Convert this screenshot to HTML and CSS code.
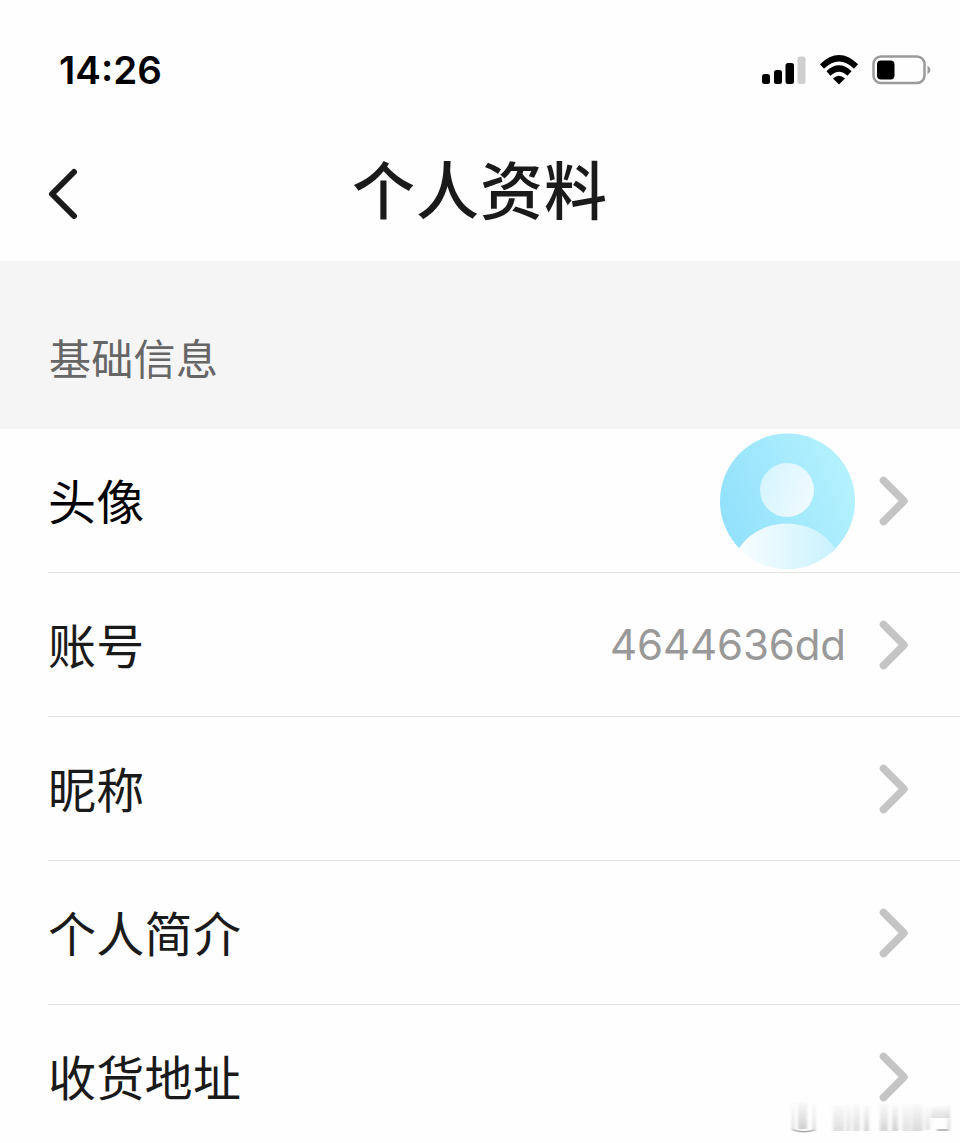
FILE: index.html
```html
<!DOCTYPE html>
<html lang="zh-CN">
<head>
    <meta charset="UTF-8">
    <meta name="viewport" content="width=device-width, initial-scale=1.0">
    <title>个人资料</title>
    <link rel="stylesheet" href="styles.css">
</head>
<body>
    <div class="status-bar">
        <div class="time">14<span class="colon">:</span>26</div>
        <svg class="status-icons" width="172" height="32" viewBox="0 0 172 32" aria-hidden="true">
            <!-- signal -->
            <rect x="2" y="19" width="8" height="10" rx="2.5"/>
            <rect x="14" y="15" width="8" height="14" rx="2.5"/>
            <rect x="25.500" y="8" width="8.500" height="21" rx="2.500"/>
            <rect x="37.500" y="1.500" width="8" height="27.500" rx="2.500" fill="#cfcfcf"/>
            <!-- wifi -->
            <path d="M62 11.500Q79 -5 96 11.500" fill="none" stroke="#000" stroke-width="6"/>
            <path d="M68.500 18.500Q79 8.500 89.500 18.500" fill="none" stroke="#000" stroke-width="6"/>
            <path d="M73 23.500Q79 18 85 23.500L79 29.500Z"/>
            <!-- battery -->
            <rect x="113.500" y="1.500" width="51" height="26.500" rx="7.500" fill="none" stroke="#9b9b9b" stroke-width="2.500"/>
            <rect x="117" y="5.500" width="17.500" height="19" rx="4"/>
            <path d="M167.500 10.500q6 4.500 0 9z" fill="#9b9b9b"/>
        </svg>
    </div>

    <header class="nav">
        <svg class="back" width="32" height="56" viewBox="0 0 32 56" aria-label="返回">
            <path d="M26 6L4 28L26 50" fill="none" stroke="#1a1a1a" stroke-width="6" stroke-linecap="round" stroke-linejoin="round"/>
        </svg>
        <h1>个人资料</h1>
    </header>

    <h2 class="section-title">基础信息</h2>

    <ul class="list">
        <li class="row">
            <span class="label first">头像</span>
            <svg class="avatar" width="136" height="136" viewBox="0 0 136 136" aria-hidden="true">
                <defs>
                    <linearGradient id="bg" x1="0" y1="0.700" x2="1" y2="0.300">
                        <stop offset="0" stop-color="#91e0fc"/>
                        <stop offset="1" stop-color="#b5f2fe"/>
                    </linearGradient>
                    <linearGradient id="head" x1="0" y1="0" x2="1" y2="0.300">
                        <stop offset="0" stop-color="#d3f4fe"/>
                        <stop offset="1" stop-color="#edfaff"/>
                    </linearGradient>
                    <linearGradient id="shoulders" x1="0.100" y1="0" x2="0.850" y2="0">
                        <stop offset="0" stop-color="#fbfeff"/>
                        <stop offset="1" stop-color="#c9f2fe"/>
                    </linearGradient>
                    <clipPath id="body"><ellipse cx="67" cy="137" rx="54" ry="46.500"/></clipPath>
                </defs>
                <circle cx="67.500" cy="68" r="67.500" fill="url(#bg)"/>
                <circle cx="67" cy="57" r="27" fill="url(#head)"/>
                <circle cx="67.500" cy="68" r="68" fill="url(#shoulders)" clip-path="url(#body)"/>
            </svg>
            <svg class="arrow" width="32" height="52" viewBox="0 0 32 52"><path d="M5.500 5.500L26 26L5.500 46.500"/></svg>
        </li>
        <li class="row">
            <span class="label">账号</span>
            <span class="value">4644636dd</span>
            <svg class="arrow" width="32" height="52" viewBox="0 0 32 52"><path d="M5.500 5.500L26 26L5.500 46.500"/></svg>
        </li>
        <li class="row">
            <span class="label">昵称</span>
            <svg class="arrow" width="32" height="52" viewBox="0 0 32 52"><path d="M5.500 5.500L26 26L5.500 46.500"/></svg>
        </li>
        <li class="row">
            <span class="label">个人简介</span>
            <svg class="arrow" width="32" height="52" viewBox="0 0 32 52"><path d="M5.500 5.500L26 26L5.500 46.500"/></svg>
        </li>
        <li class="row">
            <span class="label">收货地址</span>
            <svg class="arrow" width="32" height="52" viewBox="0 0 32 52"><path d="M5.500 5.500L26 26L5.500 46.500"/></svg>
        </li>
    </ul>

    <!-- faded watermark -->
    <svg class="watermark" width="166" height="36" viewBox="0 0 166 36" aria-hidden="true">
        <defs>
            <linearGradient id="fade" x1="0" y1="0" x2="0" y2="1">
                <stop offset="0" stop-color="#999" stop-opacity="0.050"/>
                <stop offset="1" stop-color="#999" stop-opacity="0.450"/>
            </linearGradient>
            <filter id="soft"><feGaussianBlur stdDeviation="1.500 0.700"/></filter>
        </defs>
        <g fill="url(#fade)" filter="url(#soft)">
            <rect x="3" y="2" width="2" height="27"/>
            <rect x="9" y="1" width="9" height="27"/>
            <rect x="24" y="2" width="2" height="27"/>
            <path d="M4 28q11 4 22 0v1.500q-11 4-22 0z" fill="#aaa"/>
            <rect x="44" y="4" width="11" height="26" opacity="0.700"/>
            <rect x="57" y="3" width="5" height="27" opacity="0.600"/>
            <rect x="64" y="3" width="7" height="27" opacity="0.700"/>
            <rect x="75" y="4" width="5" height="26" opacity="0.900"/>
            <rect x="91" y="3" width="8" height="27" opacity="0.900"/>
            <rect x="103" y="4" width="6" height="26"/>
            <rect x="113" y="3" width="9" height="27" opacity="0.600"/>
            <rect x="123" y="3" width="11" height="27" opacity="0.800"/>
            <rect x="136" y="6" width="5" height="23" opacity="0.600"/>
            <rect x="142" y="5" width="18" height="12" opacity="0.700"/>
            <rect x="148" y="28" width="12" height="2" fill="#bbb"/>
            <rect x="159" y="3" width="2" height="25"/>
        </g>
    </svg>
</body>
</html>
```

FILE: styles.css
```css
* {
    box-sizing: border-box;
}
body {
    position: relative;
    margin: 0;
    height: 1143px;
    overflow: hidden;
    background-color: #fefefe;
    color: #1a1a1a;
    font-family: "Noto Sans CJK SC", sans-serif;
}
.status-bar {
    display: flex;
    justify-content: space-between;
    align-items: center;
    height: 140px;
    padding: 0 28px 0 59px;
}
.time {
    font-family: Inter, sans-serif;
    font-size: 38.5px;
    font-weight: 600;
    line-height: 48px;
    color: #000;
}
.colon {
    line-height: 1;
    vertical-align: 3px;
}
.status-icons {
    margin-top: 2px;
}
.nav {
    display: grid;
    grid-template-columns: 32px 1fr 32px;
    align-items: center;
    height: 121px;
    padding: 0 48px 14px;
}
.nav h1 {
    margin: 0 0 14px;
    font-size: 63px;
    font-weight: 500;
    line-height: 80px;
    letter-spacing: 1px;
    text-align: center;
}
.section-title {
    margin: 0;
    height: 168px;
    padding: 26px 49px 0;
    background-color: #f5f5f5;
    color: #666;
    font-size: 42px;
    font-weight: 400;
    line-height: 140px;
    letter-spacing: 0.3px;
}
.list {
    margin: 0;
    padding: 0 0 0 48px;
    list-style: none;
}
.row {
    display: flex;
    align-items: center;
    height: 144px;
    padding-right: 50px;
    border-bottom: 1px solid #e3e3e3;
}
.row:last-child {
    border-bottom: none;
}
.label {
    flex: 1;
    margin-bottom: 4px;
    font-size: 48px;
    line-height: 72px;
    letter-spacing: 0.3px;
}
.label.first {
    color: #000;
}
.value {
    margin-right: 32px;
    color: #999;
    font-family: Inter, sans-serif;
    font-size: 42px;
    letter-spacing: -0.1px;
}
.avatar {
    margin-right: 22px;
}
.arrow path {
    fill: none;
    stroke: #c4c4c4;
    stroke-width: 7.5px;
    stroke-linecap: round;
    stroke-linejoin: round;
}
.watermark {
    position: absolute;
    right: 5px;
    bottom: 6px;
}
```
